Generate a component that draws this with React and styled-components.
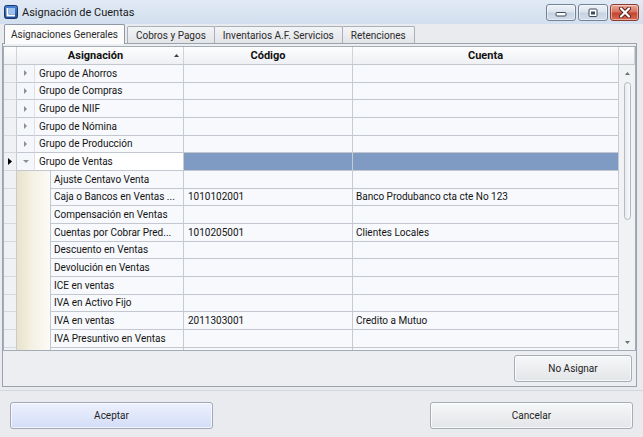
import React from 'react';
import styled, { createGlobalStyle } from 'styled-components';

const GlobalStyle = createGlobalStyle`
  html, body { margin: 0; padding: 0; }
  body {
    font-family: Roboto, "Liberation Sans", Arial, sans-serif;
    background: #e9ebef;
  }
`;

const Window = styled.div`
  width: 643px;
  height: 437px;
  display: flex;
  flex-direction: column;
  background: #e9ebef;
  overflow: hidden;
`;

const TitleBar = styled.div`
  height: 24px;
  flex: none;
  display: flex;
  align-items: center;
  gap: 4px;
  padding: 0 4px;
  background: linear-gradient(#e1eaf5, #d3dfee);
`;

const Title = styled.div`
  flex: 1;
  font-size: 11px;
  color: #1a1a1a;
`;

const WinButtons = styled.div`
  display: flex;
  gap: 2px;
  align-self: flex-start;
  margin-top: 4px;
`;

const WinButton = styled.div`
  width: ${(p) => (p.$close ? 29 : 30)}px;
  height: 17px;
  box-sizing: border-box;
  border: 1px solid ${(p) => (p.$close ? '#8c3b2f' : '#72829a')};
  border-radius: 3px;
  display: flex;
  align-items: center;
  justify-content: center;
  background: ${(p) =>
    p.$close
      ? 'linear-gradient(#eaa99b 0%, #d6705c 48%, #c4432f 52%, #d46a55 100%)'
      : 'linear-gradient(#eff3f9 0%, #dbe3ee 48%, #c7d2e1 52%, #d3dce9 100%)'};
  box-shadow: inset 0 0 0 1px rgba(255, 255, 255, 0.45);
`;

const TabStrip = styled.div`
  height: 19px;
  flex: none;
  display: flex;
  align-items: flex-end;
  padding-left: 4px;
`;

const Tab = styled.div`
  box-sizing: border-box;
  height: ${(p) => (p.$active ? 20 : 17)}px;
  padding: 0 ${(p) => (p.$active ? 6 : 8)}px;
  margin-right: ${(p) => (p.$active ? 2 : -1)}px;
  margin-bottom: ${(p) => (p.$active ? -1 : 0)}px;
  display: flex;
  align-items: center;
  font-size: 10px;
  color: #2b2b2b;
  border: 1px solid ${(p) => (p.$active ? '#8f99a6' : '#a9b0b9')};
  border-bottom: none;
  border-radius: 2px 2px 0 0;
  background: ${(p) => (p.$active ? '#fbfbfc' : 'linear-gradient(#f3f4f6, #e2e4e8)')};
  position: relative;
  z-index: ${(p) => (p.$active ? 2 : 1)};
`;

const Panel = styled.div`
  margin: 0 6px 0 2px;
  height: 344px;
  flex: none;
  box-sizing: border-box;
  border: 1px solid #9ba3ae;
  background: #eceef1;
  padding-top: 2px;
  display: flex;
  flex-direction: column;
`;

const Grid = styled.div`
  height: 305px;
  flex: none;
  box-sizing: border-box;
  border: 1px solid #a4acb6;
  background: #f7f9fc;
  display: flex;
  flex-direction: column;
  overflow: hidden;
`;

const HeaderRow = styled.div`
  display: flex;
  height: 18px;
  flex: none;
  box-sizing: border-box;
  border-bottom: 1px solid #c3c8cf;
  background: linear-gradient(#fdfdfe, #eef0f3);
`;

const HeaderCell = styled.div`
  width: ${(p) => p.$w}px;
  flex: none;
  box-sizing: border-box;
  border-right: 1px solid #d0d4da;
  padding-right: ${(p) => p.$pr || 0}px;
  display: flex;
  align-items: center;
  justify-content: center;
  font-weight: 700;
  font-size: 11px;
  color: #111;
  position: relative;
`;

const SortArrow = styled.svg`
  position: absolute;
  right: 4px;
  top: 7px;
`;

const Body = styled.div`
  flex: 1;
  display: flex;
  min-height: 0;
`;

const Rows = styled.div`
  flex: 1;
  overflow: hidden;
`;

const Row = styled.div`
  display: flex;
  height: 17.667px;
`;

const IndicatorCell = styled.div`
  width: 13px;
  flex: none;
  box-sizing: border-box;
  border-right: 1px solid #c6cbd2;
  border-bottom: 1px solid #d5d9df;
  background: #eff1f4;
  display: flex;
  align-items: center;
  justify-content: center;
`;

const ExpanderCell = styled.div`
  width: 18px;
  flex: none;
  box-sizing: border-box;
  border-right: 1px solid #dde1e6;
  border-bottom: 1px solid #c3c8d0;
  background: #f5f7fa;
  display: flex;
  align-items: center;
  justify-content: center;
`;

const IndentCell = styled.div`
  width: 34px;
  flex: none;
  box-sizing: border-box;
  border-right: 1px solid #c3c8d0;
  background: linear-gradient(to right, #e8e2ca, #f4f1e4 45%, #fbfaf6);
`;

const DataCell = styled.div`
  width: ${(p) => p.$w}px;
  flex: none;
  box-sizing: border-box;
  border-right: 1px solid #c6cbd2;
  border-bottom: 1px solid #c3c8d0;
  background: ${(p) => (p.$focus ? '#ffffff' : p.$sel ? '#7f9bc4' : '#f7f9fc')};
  padding-left: ${(p) => p.$pl || 4}px;
  font-size: 10px;
  color: #141414;
  display: flex;
  align-items: center;
  white-space: nowrap;
  overflow: hidden;
`;

const ScrollBar = styled.div`
  width: 16px;
  flex: none;
  background: #f1f2f4;
  display: flex;
  flex-direction: column;
  align-items: center;
`;

const ScrollArrow = styled.div`
  height: 16px;
  flex: none;
  display: flex;
  align-items: center;
  justify-content: center;
`;

const ScrollTrack = styled.div`
  flex: 1;
  padding-top: 1px;
`;

const Thumb = styled.div`
  width: 7px;
  height: 138px;
  box-sizing: border-box;
  border: 1px solid #b4bac3;
  border-radius: 4px;
  background: linear-gradient(to right, #e9ebee, #f7f8f9);
  margin-left: 1px;
`;

const ButtonRow = styled.div`
  flex: 1;
  display: flex;
  justify-content: flex-end;
  align-items: flex-start;
  padding: 4px 4px 0 0;
`;

const Button = styled.button`
  width: ${(p) => p.$w}px;
  height: 27px;
  box-sizing: border-box;
  border: 1px solid ${(p) => (p.$primary ? '#a0a8b9' : '#a6adb6')};
  border-radius: 3px;
  background: ${(p) =>
    p.$primary ? 'linear-gradient(#edf1fd, #d3ddf7)' : 'linear-gradient(#f6f7f8, #e3e5e8)'};
  box-shadow: inset 0 0 0 1px rgba(255, 255, 255, 0.7);
  font-family: inherit;
  font-size: 10px;
  color: #1e1e1e;
  padding: 0;
`;

const Footer = styled.div`
  margin-top: 3px;
  border-top: 1px solid #d4d8de;
  flex: 1;
  display: flex;
  justify-content: space-between;
  align-items: flex-start;
  padding: 11px 10px 0 10px;
`;

const Tri = ({ dir, color = '#7d838b', w = 4, h = 7 }) => {
  let pts;
  if (dir === 'right') pts = `0,0 ${w},${h / 2} 0,${h}`;
  else if (dir === 'down') pts = `0,0 ${w},0 ${w / 2},${h}`;
  else pts = `0,${h} ${w},${h} ${w / 2},0`;
  return (
    <svg width={w} height={h} viewBox={`0 0 ${w} ${h}`}>
      <polygon points={pts} fill={color} />
    </svg>
  );
};

const AppIcon = () => (
  <svg width="14" height="14" viewBox="0 0 14 14">
    <defs>
      <linearGradient id="ig" x1="0" y1="0" x2="0" y2="1">
        <stop offset="0" stopColor="#4a86d6" />
        <stop offset="1" stopColor="#1c4a94" />
      </linearGradient>
    </defs>
    <rect x="0.5" y="0.5" width="13" height="13" rx="2" fill="url(#ig)" stroke="#17376c" />
    <rect x="5" y="3" width="6" height="6" fill="#9cc3f0" />
    <path d="M3.5 3 V10.5 H11" stroke="#ffffff" strokeWidth="2" fill="none" />
  </svg>
);

const groups = [
  'Grupo de Ahorros',
  'Grupo de Compras',
  'Grupo de NIIF',
  'Grupo de Nómina',
  'Grupo de Producción',
];

const children = [
  ['Ajuste Centavo Venta', '', ''],
  ['Caja o Bancos en Ventas ...', '1010102001', 'Banco Produbanco cta cte No 123'],
  ['Compensación en Ventas', '', ''],
  ['Cuentas por Cobrar Pred...', '1010205001', 'Clientes Locales'],
  ['Descuento en Ventas', '', ''],
  ['Devolución en Ventas', '', ''],
  ['ICE en ventas', '', ''],
  ['IVA en Activo Fijo', '', ''],
  ['IVA en ventas', '2011303001', 'Credito a Mutuo'],
  ['IVA Presuntivo en Ventas', '', ''],
  ['', '', ''],
];

export default function App() {
  return (
    <>
      <GlobalStyle />
      <Window>
        <TitleBar>
          <AppIcon />
          <Title>Asignación de Cuentas</Title>
          <WinButtons>
            <WinButton>
              <svg width="12" height="8" viewBox="0 0 12 8">
                <rect x="1" y="3.5" width="10" height="3.5" rx="1" fill="#fff" stroke="#3d4a5c" />
              </svg>
            </WinButton>
            <WinButton>
              <svg width="12" height="10" viewBox="0 0 12 10">
                <rect x="2" y="1" width="8" height="7.5" rx="1" fill="#fff" stroke="#3d4a5c" />
                <rect x="4" y="3.5" width="4" height="3" fill="#3d4a5c" />
              </svg>
            </WinButton>
            <WinButton $close>
              <svg width="14" height="11" viewBox="0 0 14 11">
                <path d="M3 1.5 L11 9.5 M11 1.5 L3 9.5" stroke="#5a1e16" strokeWidth="4" strokeLinecap="round" />
                <path d="M3 1.5 L11 9.5 M11 1.5 L3 9.5" stroke="#ffffff" strokeWidth="2.2" strokeLinecap="round" />
              </svg>
            </WinButton>
          </WinButtons>
        </TitleBar>

        <TabStrip>
          <Tab $active>Asignaciones Generales</Tab>
          <Tab>Cobros y Pagos</Tab>
          <Tab>Inventarios A.F. Servicios</Tab>
          <Tab>Retenciones</Tab>
        </TabStrip>

        <Panel>
          <Grid>
            <HeaderRow>
              <HeaderCell $w={13} />
              <HeaderCell $w={167} $pr={9}>
                Asignación
                <SortArrow width="5" height="3" viewBox="0 0 5 3">
                  <polygon points="0,3 5,3 2.5,0" fill="#3c4047" />
                </SortArrow>
              </HeaderCell>
              <HeaderCell $w={169}>Código</HeaderCell>
              <HeaderCell $w={266}>Cuenta</HeaderCell>
              <HeaderCell $w={16} />
            </HeaderRow>
            <Body>
              <Rows>
                {groups.map((g) => (
                  <Row key={g}>
                    <IndicatorCell />
                    <ExpanderCell>
                      <Tri dir="right" w={3} h={6} color="#8a9098" />
                    </ExpanderCell>
                    <DataCell $w={149}>{g}</DataCell>
                    <DataCell $w={169} />
                    <DataCell $w={266} />
                  </Row>
                ))}
                <Row>
                  <IndicatorCell>
                    <Tri dir="right" w={4} h={7} color="#000" />
                  </IndicatorCell>
                  <ExpanderCell>
                    <Tri dir="down" w={6} h={3} color="#8a9098" />
                  </ExpanderCell>
                  <DataCell $w={149} $focus>
                    Grupo de Ventas
                  </DataCell>
                  <DataCell $w={169} $sel />
                  <DataCell $w={266} $sel />
                </Row>
                {children.map(([a, c, q], i) => (
                  <Row key={i}>
                    <IndicatorCell />
                    <IndentCell />
                    <DataCell $w={133} $pl={3}>
                      {a}
                    </DataCell>
                    <DataCell $w={169}>{c}</DataCell>
                    <DataCell $w={266} $pl={3}>
                      {q}
                    </DataCell>
                  </Row>
                ))}
              </Rows>
              <ScrollBar>
                <ScrollArrow>
                  <Tri dir="up" w={5} h={3} color="#6c727a" />
                </ScrollArrow>
                <ScrollTrack>
                  <Thumb />
                </ScrollTrack>
                <ScrollArrow>
                  <Tri dir="down" w={5} h={3} color="#6c727a" />
                </ScrollArrow>
              </ScrollBar>
            </Body>
          </Grid>
          <ButtonRow>
            <Button $w={118}>No Asignar</Button>
          </ButtonRow>
        </Panel>

        <Footer>
          <Button $w={203} $primary>
            Aceptar
          </Button>
          <Button $w={203}>Cancelar</Button>
        </Footer>
      </Window>
    </>
  );
}
